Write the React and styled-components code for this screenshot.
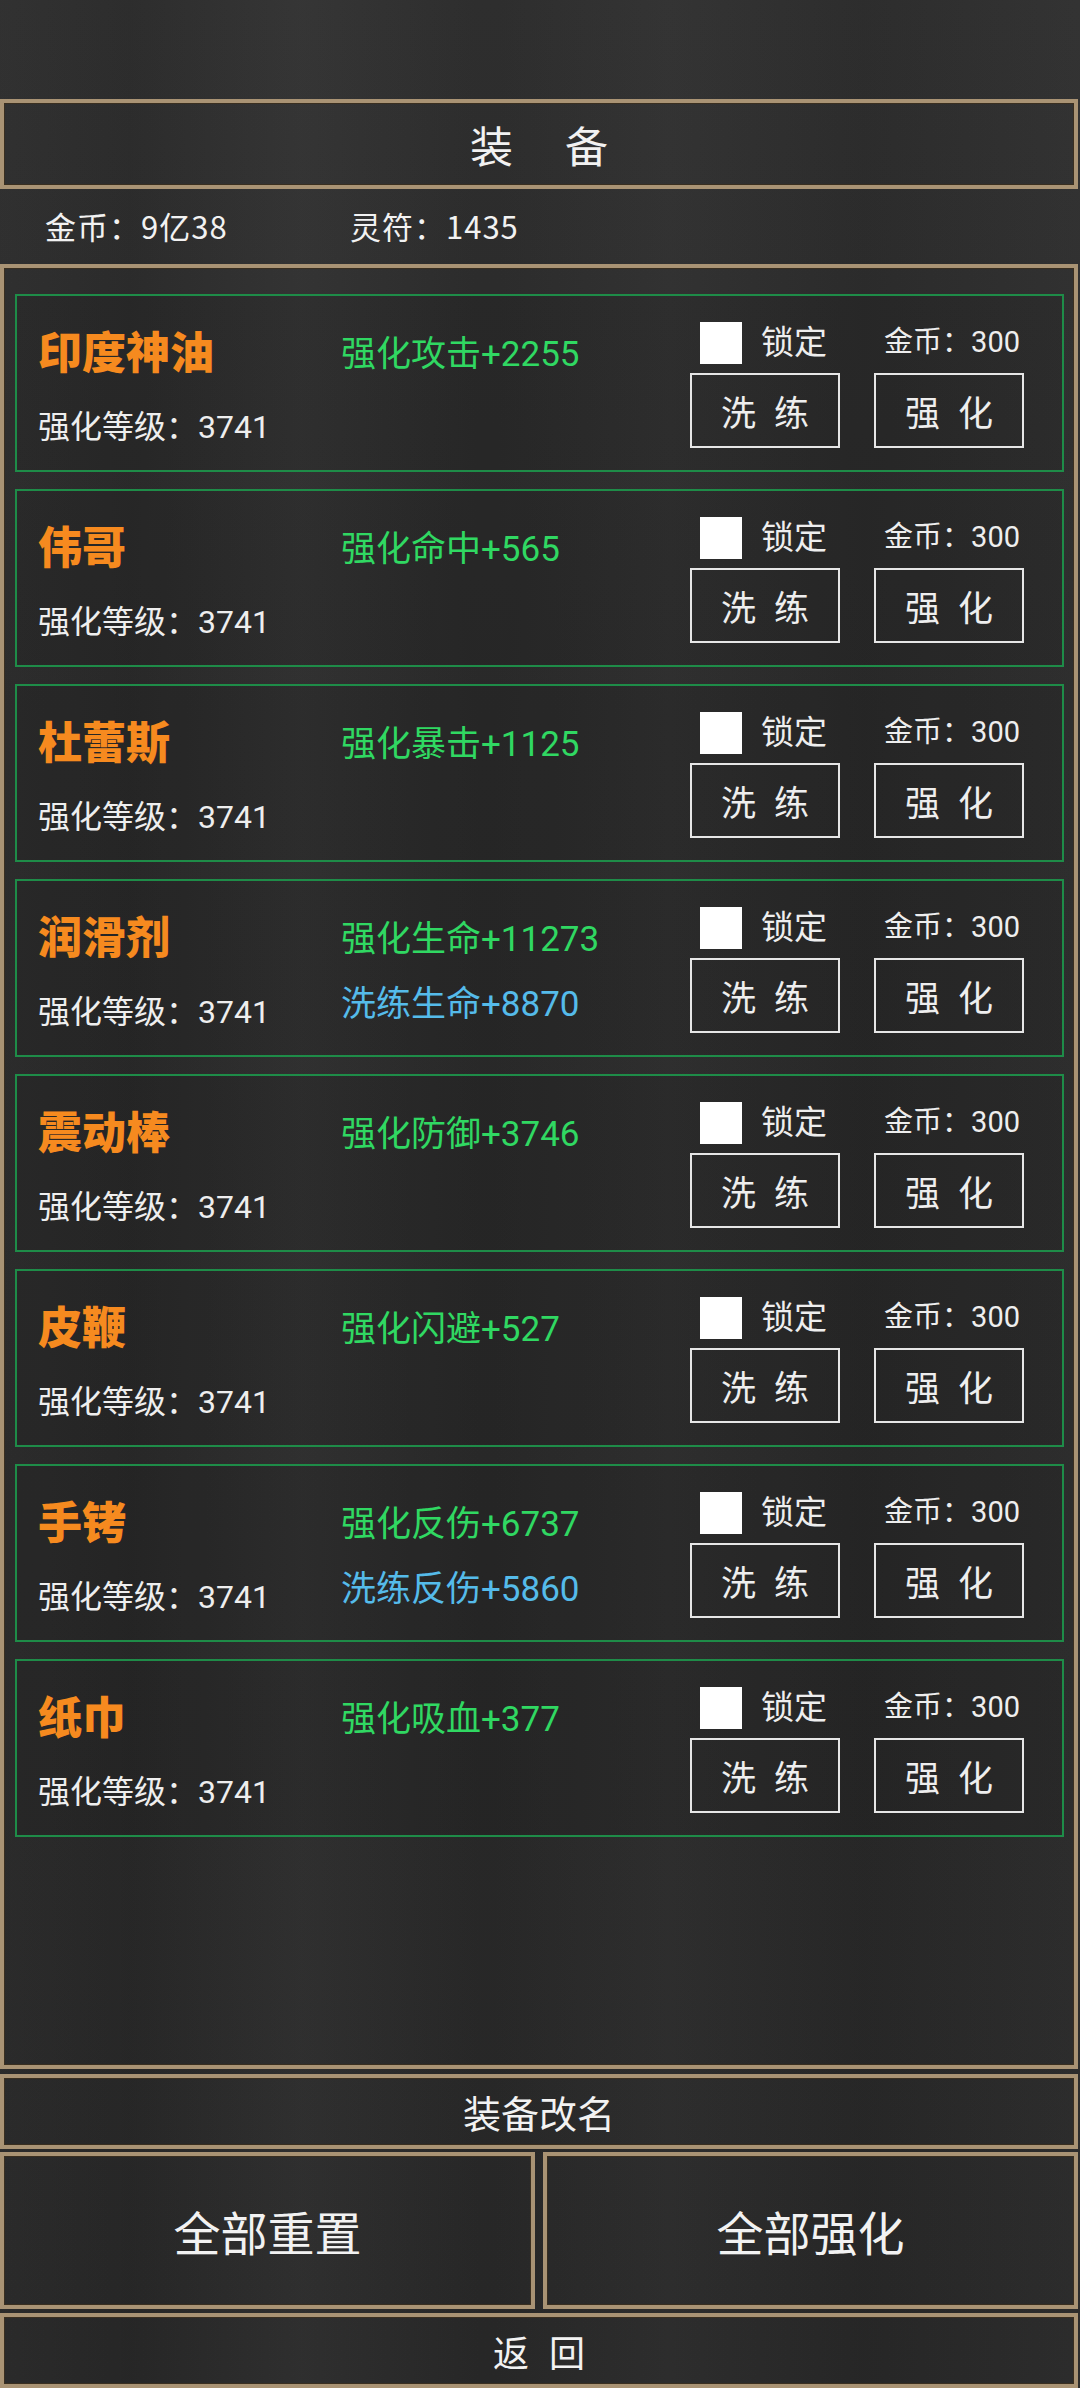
import React from "react";
import styled, { createGlobalStyle } from "styled-components";

const GlobalStyle = createGlobalStyle`
  html, body {
    margin: 0;
    padding: 0;
    background: #2a2a2a;
  }
  * {
    box-sizing: border-box;
  }
  body {
    font-family: Roboto, "Noto Sans CJK SC", sans-serif;
    color: #f0f0f0;
  }
`;

const items = [
  { name: "印度神油", up: "强化攻击+2255" },
  { name: "伟哥", up: "强化命中+565" },
  { name: "杜蕾斯", up: "强化暴击+1125" },
  { name: "润滑剂", up: "强化生命+11273", wash: "洗练生命+8870" },
  { name: "震动棒", up: "强化防御+3746" },
  { name: "皮鞭", up: "强化闪避+527" },
  { name: "手铐", up: "强化反伤+6737", wash: "洗练反伤+5860" },
  { name: "纸巾", up: "强化吸血+377" },
];

export default function App() {
  return (
    <>
      <GlobalStyle />
      <Page>
        <TopSpace />
        <TitleBar>装备</TitleBar>
        <StatsRow>
          <Stat width={305}>金币：9亿38</Stat>
          <Stat>灵符：1435</Stat>
        </StatsRow>
        <Panel>
          {items.map((item) => (
            <Card key={item.name}>
              <LeftCol>
                <ItemName>{item.name}</ItemName>
                <Level>强化等级：3741</Level>
              </LeftCol>
              <MidCol>
                <Bonus>{item.up}</Bonus>
                {item.wash && <Bonus wash>{item.wash}</Bonus>}
              </MidCol>
              <RightCol>
                <LockRow>
                  <CheckBox />
                  <LockLabel>锁定</LockLabel>
                  <Cost>金币：300</Cost>
                </LockRow>
                <ButtonRow>
                  <SmallButton>洗练</SmallButton>
                  <SmallButton>强化</SmallButton>
                </ButtonRow>
              </RightCol>
            </Card>
          ))}
        </Panel>
        <RenameBar>装备改名</RenameBar>
        <BigRow>
          <BigButton>全部重置</BigButton>
          <BigButton>全部强化</BigButton>
        </BigRow>
        <BackBar>返回</BackBar>
      </Page>
    </>
  );
}

const Page = styled.div`
  width: 1080px;
  min-height: 2388px;
  display: flex;
  flex-direction: column;
  overflow: hidden;
  background:
    linear-gradient(
      90deg,
      rgba(255, 255, 255, 0.01) 0%,
      rgba(0, 0, 0, 0.04) 12%,
      rgba(255, 255, 255, 0.03) 28%,
      rgba(0, 0, 0, 0.03) 45%,
      rgba(255, 255, 255, 0.025) 62%,
      rgba(0, 0, 0, 0.04) 80%,
      rgba(255, 255, 255, 0.02) 100%
    ),
    linear-gradient(180deg, #2f2f2f 0%, #2a2a2a 30%, #282828 100%);
`;

const TopSpace = styled.div`
  height: 99px;
  flex-shrink: 0;
`;

const Frame = styled.div`
  margin: 0 2px 0 0;
  border: 4px solid #a99374;
  box-shadow: inset 0 0 0 1px #3a2f20;
  display: flex;
  align-items: center;
  justify-content: center;
  flex-shrink: 0;
  font-family: "Noto Sans CJK SC", sans-serif;
  color: #f2f2f2;
`;

const TitleBar = styled(Frame)`
  height: 90px;
  font-size: 43px;
  letter-spacing: 52px;
  padding-left: 52px;
`;

const StatsRow = styled.div`
  height: 75px;
  display: flex;
  align-items: center;
  padding: 0 0 2px 45px;
  flex-shrink: 0;
`;

const Stat = styled.div`
  width: ${(p) => (p.width ? `${p.width}px` : "auto")};
  font-family: "Noto Sans CJK SC", sans-serif;
  font-size: 31px;
  letter-spacing: 1px;
  color: #f2f2f2;
`;

const Panel = styled(Frame)`
  height: 1805px;
  flex-direction: column;
  align-items: stretch;
  justify-content: flex-start;
  gap: 17px;
  padding: 26px 10px 0 11px;
`;

const Card = styled.div`
  height: 178px;
  border: 2px solid #1e8c48;
  background: rgba(0, 0, 0, 0.07);
  display: flex;
  padding: 0 38px 0 21px;
  font-family: Roboto, "Noto Sans CJK SC", sans-serif;
`;

const LeftCol = styled.div`
  width: 303px;
  display: flex;
  flex-direction: column;
  padding-top: 28px;
  gap: 20px;
`;

const ItemName = styled.div`
  height: 60px;
  line-height: 60px;
  font-size: 44px;
  font-weight: 900;
  color: #f68a1f;
  white-space: nowrap;
`;

const Level = styled.div`
  height: 46px;
  line-height: 46px;
  font-size: 32px;
  color: #eeeeee;
  white-space: nowrap;
`;

const MidCol = styled.div`
  flex: 1;
  display: flex;
  flex-direction: column;
  padding-top: 29px;
  gap: 12px;
`;

const Bonus = styled.div`
  height: ${(p) => (p.wash ? "46px" : "60px")};
  line-height: ${(p) => (p.wash ? "46px" : "60px")};
  font-size: 35px;
  color: ${(p) => (p.wash ? "#55bbea" : "#30d862")};
  white-space: nowrap;
`;

const RightCol = styled.div`
  width: 334px;
  display: flex;
  flex-direction: column;
  padding-top: 24px;
  gap: 7px;
`;

const LockRow = styled.div`
  height: 46px;
  display: flex;
  align-items: center;
  padding: 0 4px 0 10px;
`;

const CheckBox = styled.div`
  width: 42px;
  height: 42px;
  background: #ffffff;
  flex-shrink: 0;
`;

const LockLabel = styled.div`
  margin: 0 0 6px 19px;
  font-size: 33px;
  color: #eeeeee;
`;

const Cost = styled.div`
  margin: 0 0 8px auto;
  font-size: 29px;
  color: #eeeeee;
`;

const ButtonRow = styled.div`
  display: flex;
  justify-content: space-between;
`;

const SmallButton = styled.div`
  width: 150px;
  height: 75px;
  border: 2px solid #e6e6e6;
  display: flex;
  align-items: center;
  justify-content: center;
  font-size: 35px;
  letter-spacing: 18px;
  padding-left: 18px;
  color: #eeeeee;
`;

const RenameBar = styled(Frame)`
  height: 75px;
  margin-top: 5px;
  font-size: 38px;
`;

const BigRow = styled.div`
  display: grid;
  grid-template-columns: 1fr 1fr;
  gap: 8px;
  margin: 3px 2px 0 0;
  height: 157px;
  flex-shrink: 0;
`;

const BigButton = styled(Frame)`
  margin: 0;
  font-size: 47px;
`;

const BackBar = styled(Frame)`
  height: 75px;
  margin-top: 4px;
  font-size: 36px;
  letter-spacing: 20px;
  padding-left: 20px;
`;
